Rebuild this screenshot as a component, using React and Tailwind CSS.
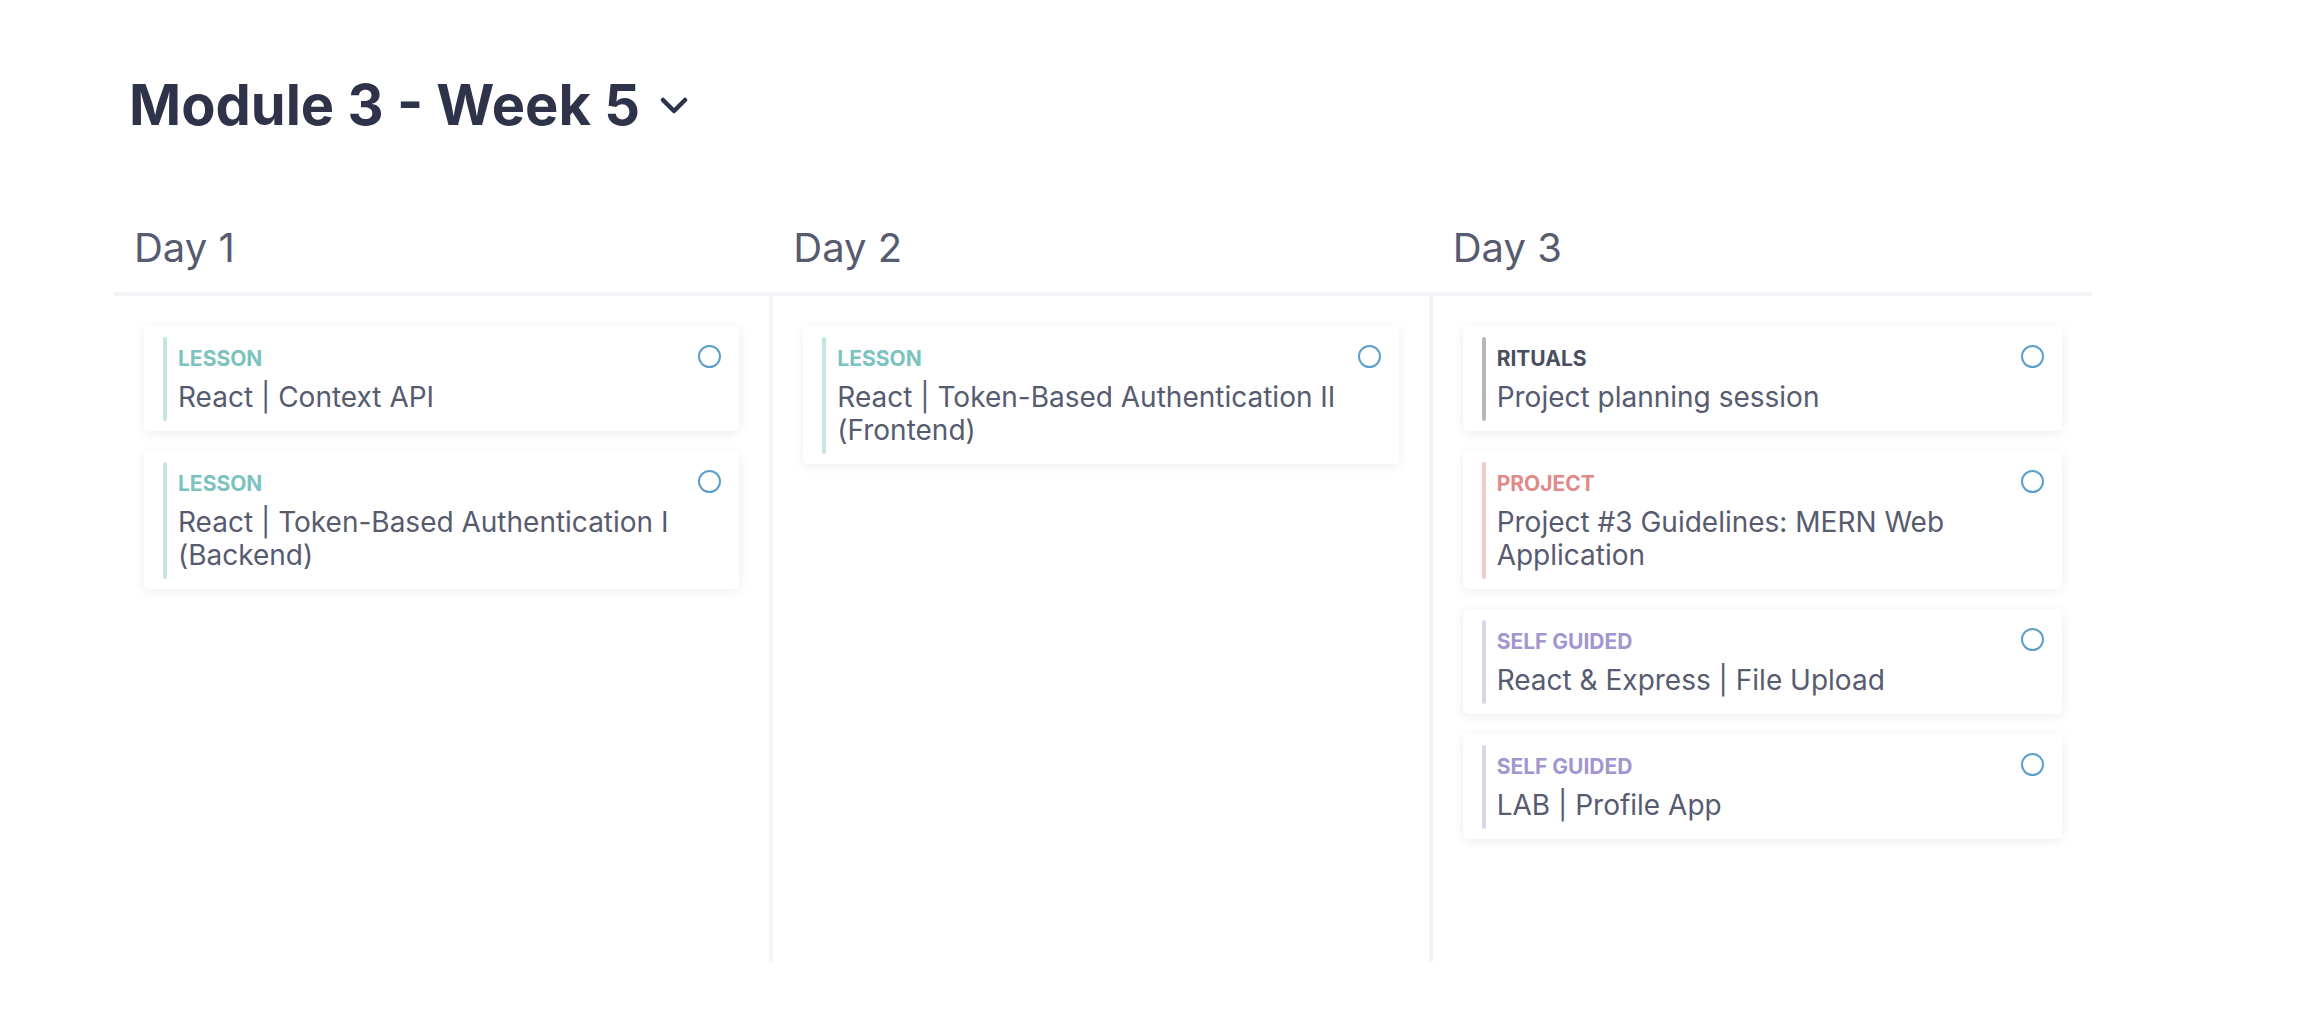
import React from "react";

const typeStyles = {
  LESSON: { label: "text-[#7cc3bf]", bar: "bg-[#c4e5e2]" },
  RITUALS: { label: "text-[#4a4e5e]", bar: "bg-[#b6b7bd]" },
  PROJECT: { label: "text-[#e08989]", bar: "bg-[#f3caca]" },
  "SELF GUIDED": { label: "text-[#a396cf]", bar: "bg-[#d9d5ec]" },
};

const days = [
  {
    name: "Day 1",
    items: [
      { type: "LESSON", title: "React | Context API" },
      { type: "LESSON", title: "React | Token-Based Authentication I (Backend)" },
    ],
  },
  {
    name: "Day 2",
    items: [
      { type: "LESSON", title: "React | Token-Based Authentication II (Frontend)" },
    ],
  },
  {
    name: "Day 3",
    items: [
      { type: "RITUALS", title: "Project planning session" },
      { type: "PROJECT", title: "Project #3 Guidelines: MERN Web Application" },
      { type: "SELF GUIDED", title: "React & Express | File Upload" },
      { type: "SELF GUIDED", title: "LAB | Profile App" },
    ],
  },
];

const ActivityCard = ({ type, title }) => {
  const style = typeStyles[type];
  return (
    <div className="flex rounded-[5px] bg-white pt-[11px] pb-[10px] pl-[19px] pr-[18px] shadow-[0_2px_12px_rgba(15,23,42,0.08)]">
      <div className={`w-[4px] shrink-0 rounded-full ${style.bar}`} />
      <div className="flex-1 py-[7px] pl-[11px] pr-[10px]">
        <div className={`text-[21px] leading-[29px] font-bold ${style.label}`}>
          {type}
        </div>
        <div className="mt-[8px] text-[28px] leading-[33px] text-[#575b70]">
          {title}
        </div>
      </div>
      {/* status circle */}
      <div className="mt-[8px] h-[23px] w-[23px] shrink-0 rounded-full border-2 border-[#5b9fca]" />
    </div>
  );
};

const App = () => {
  return (
    <div className="min-h-screen bg-white font-['Inter',sans-serif]">
      <div className="ml-[114px] w-[1978px] pt-[72px]">
        {/* Week title */}
        <div className="flex items-center pl-[15px]">
          <h1 className="text-[56px] leading-[67px] font-bold text-[#2e3349]">
            Module 3 - Week 5
          </h1>
          <svg
            className="ml-[20px]"
            width="28"
            height="18"
            viewBox="0 0 28 18"
            fill="none"
            stroke="#2e3349"
            strokeWidth="4.5"
            strokeLinecap="round"
            strokeLinejoin="round"
          >
            <polyline points="3,3 14,14 25,3" />
          </svg>
        </div>

        {/* Day headers */}
        <div className="mt-[85px] grid grid-cols-3 border-b-4 border-[#f3f4f7]">
          {days.map((day) => (
            <div
              key={day.name}
              className="pl-[20px] pb-[20px] text-[40px] leading-[48px] text-[#575b70]"
            >
              {day.name}
            </div>
          ))}
        </div>

        {/* Day columns */}
        <div className="grid h-[666px] grid-cols-3">
          {days.map((day, i) => (
            <div
              key={day.name}
              className={
                i < 2
                  ? "flex flex-col gap-[20px] border-r-4 border-[#f3f4f7] px-[30px] pt-[30px]"
                  : "flex flex-col gap-[20px] px-[30px] pt-[30px]"
              }
            >
              {day.items.map((item, j) => (
                <ActivityCard key={j} type={item.type} title={item.title} />
              ))}
            </div>
          ))}
        </div>
      </div>
    </div>
  );
};

export default App;
